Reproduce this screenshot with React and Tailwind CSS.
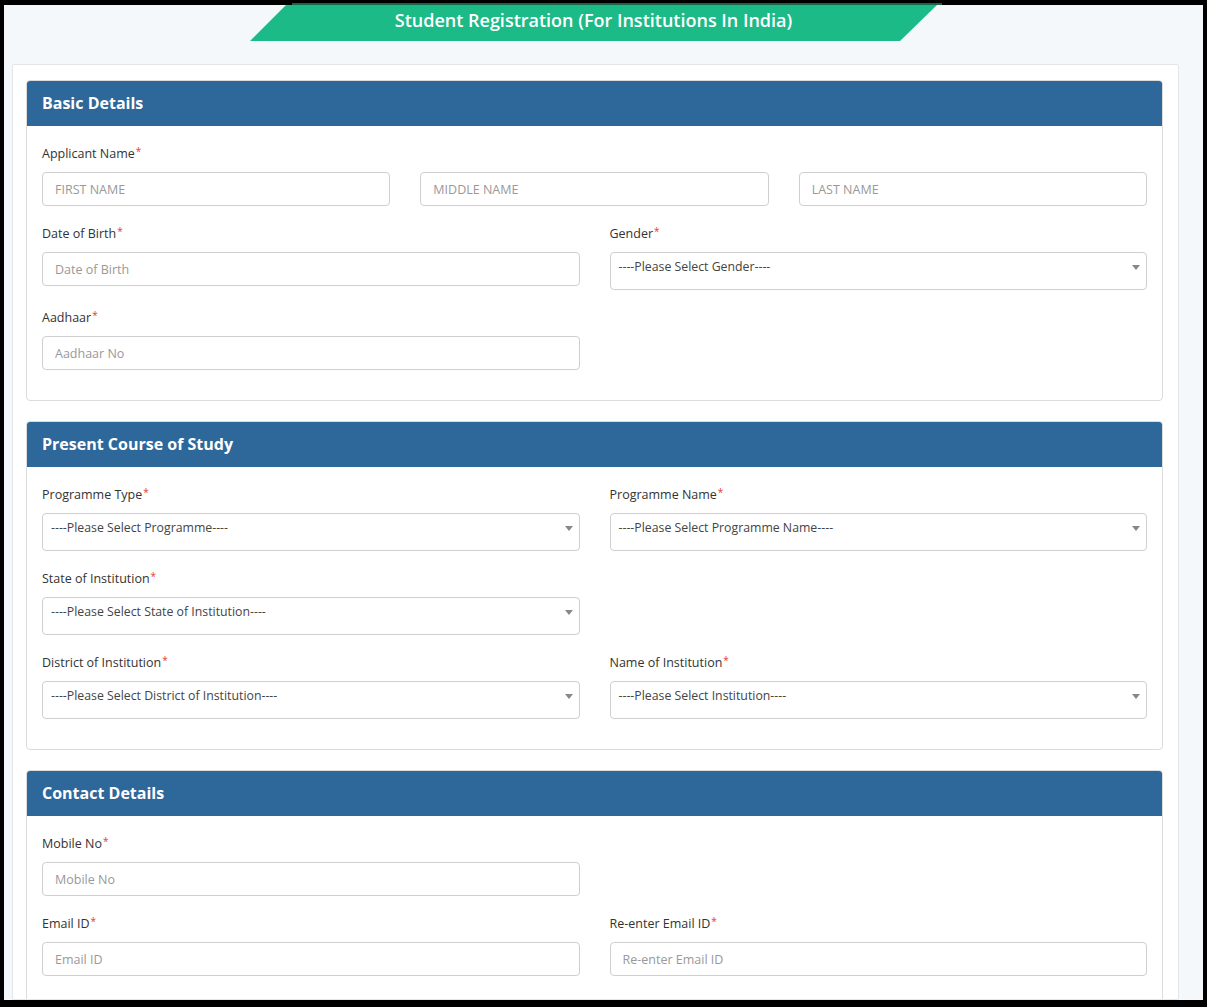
import React from "react";

const Label = ({ children }) => (
  <div className="h-5 leading-5 mb-2 text-[12.5px] text-[#333]">
    {children}
    <span className="text-[#e53935] text-[10px] align-top relative -top-[3px] ml-[1px]">*</span>
  </div>
);

const TextInput = ({ placeholder }) => (
  <input
    type="text"
    placeholder={placeholder}
    className="w-full h-[34px] border border-[#cfcfcf] rounded-[4px] bg-white px-3 text-[12.5px] text-[#555] placeholder:text-[#999] outline-none"
  />
);

const Select = ({ text }) => (
  <div className="w-full h-[38px] border border-[#cfcfcf] rounded-[4px] bg-white flex justify-between items-start">
    <div className="pl-2 leading-[28px] text-[12.3px] text-[#444]">{text}</div>
    <div className="mt-[12px] mr-[6px] w-0 h-0 border-l-[4px] border-r-[4px] border-t-[5px] border-l-transparent border-r-transparent border-t-[#888]" />
  </div>
);

const Field = ({ label, children }) => (
  <div className="mb-[18px]">
    <Label>{label}</Label>
    {children}
  </div>
);

const Panel = ({ title, children }) => (
  <div className="border border-[#dcdcdc] rounded-[4px] mb-[20px] bg-white">
    <div className="h-[45px] bg-[#2e6799] rounded-t-[3px] px-[15px] pb-[2px] flex items-center text-white font-bold text-[16px]">
      {title}
    </div>
    <div className="px-[15px] pt-[18px] pb-[12px]">{children}</div>
  </div>
);

export default function App() {
  return (
    <div className="h-[1007px] overflow-hidden bg-black px-1 pb-[7px] flex flex-col font-['Open_Sans',sans-serif]">
      {/* top frame with the edge of the banner */}
      <div className="h-[5px] shrink-0">
        <div className="ml-[288px] mt-[3px] w-[650px] h-[2px] bg-[#17684b]" />
      </div>

      <div className="flex-1 bg-[#f5f8fa] flex flex-col overflow-hidden">
        {/* title banner */}
        <div className="ml-[246px] w-[687px] h-[36px] shrink-0 bg-[#1bba87] [clip-path:polygon(36px_0,100%_0,calc(100%-37px)_100%,0_100%)] flex items-center justify-center pb-[6px]">
          <span className="text-white text-[18px] font-semibold">
            Student Registration (For Institutions In India)
          </span>
        </div>

        {/* card */}
        <div className="flex-1 mt-[23px] ml-2 mr-6 bg-white border border-[#e4e7ea] rounded-t-[2px] pl-[13px] pr-[15px] pt-[15px] overflow-hidden">
          <Panel title="Basic Details">
            <div className="mb-[18px]">
              <Label>Applicant Name</Label>
              <div className="grid grid-cols-3 gap-x-[30px]">
                <TextInput placeholder="FIRST NAME" />
                <TextInput placeholder="MIDDLE NAME" />
                <TextInput placeholder="LAST NAME" />
              </div>
            </div>
            <div className="grid grid-cols-2 gap-x-[30px]">
              <Field label="Date of Birth">
                <TextInput placeholder="Date of Birth" />
              </Field>
              <Field label="Gender">
                <Select text="----Please Select Gender----" />
              </Field>
              <Field label="Aadhaar">
                <TextInput placeholder="Aadhaar No" />
              </Field>
            </div>
          </Panel>

          <Panel title="Present Course of Study">
            <div className="grid grid-cols-2 gap-x-[30px]">
              <Field label="Programme Type">
                <Select text="----Please Select Programme----" />
              </Field>
              <Field label="Programme Name">
                <Select text="----Please Select Programme Name----" />
              </Field>
              <Field label="State of Institution">
                <Select text="----Please Select State of Institution----" />
              </Field>
              <div />
              <Field label="District of Institution">
                <Select text="----Please Select District of Institution----" />
              </Field>
              <Field label="Name of Institution">
                <Select text="----Please Select Institution----" />
              </Field>
            </div>
          </Panel>

          <Panel title="Contact Details">
            <div className="grid grid-cols-2 gap-x-[30px]">
              <Field label="Mobile No">
                <TextInput placeholder="Mobile No" />
              </Field>
              <div />
              <Field label="Email ID">
                <TextInput placeholder="Email ID" />
              </Field>
              <Field label="Re-enter Email ID">
                <TextInput placeholder="Re-enter Email ID" />
              </Field>
            </div>
          </Panel>
        </div>
      </div>
    </div>
  );
}
